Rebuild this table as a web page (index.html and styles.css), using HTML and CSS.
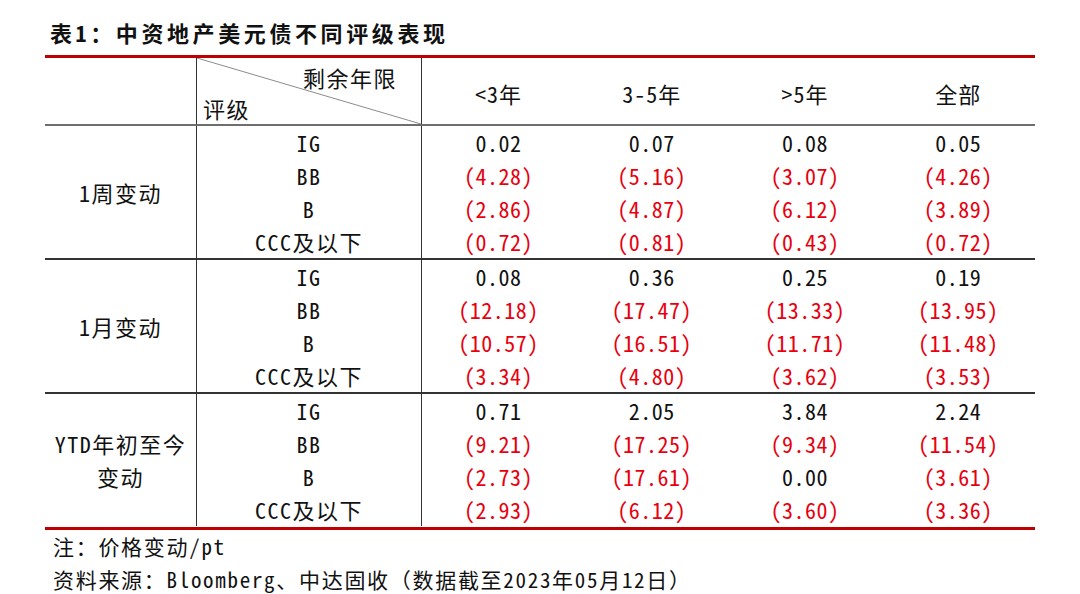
FILE: index.html
```html
<!DOCTYPE html>
<html lang="zh-CN">
<head>
<meta charset="utf-8">
<title>表1：中资地产美元债不同评级表现</title>
<link rel="stylesheet" href="styles.css">
</head>
<body>
<div class="page">
  <div class="title">表1：中资地产美元债不同评级表现</div>
  <div class="table">
    <div class="grid thead">
      <div class="cell vline"></div>
      <div class="cell vline diag">
        <svg class="diag-line" width="100%" height="100%" preserveAspectRatio="none"><line x1="0" y1="0" x2="100%" y2="100%"/></svg>
        <span class="diag-top">剩余年限</span>
        <span class="diag-bottom">评级</span>
      </div>
      <div class="cell head">&lt;3年</div>
      <div class="cell head">3-5年</div>
      <div class="cell head">&gt;5年</div>
      <div class="cell head">全部</div>
    </div>

    <div class="grid group">
      <div class="cell label vline">1周变动</div>
      <div class="cell rating vline">IG</div>
      <div class="cell num">0.02</div><div class="cell num">0.07</div><div class="cell num">0.08</div><div class="cell num">0.05</div>
      <div class="cell rating vline">BB</div>
      <div class="cell num neg">(4.28)</div><div class="cell num neg">(5.16)</div><div class="cell num neg">(3.07)</div><div class="cell num neg">(4.26)</div>
      <div class="cell rating vline">B</div>
      <div class="cell num neg">(2.86)</div><div class="cell num neg">(4.87)</div><div class="cell num neg">(6.12)</div><div class="cell num neg">(3.89)</div>
      <div class="cell rating vline">CCC及以下</div>
      <div class="cell num neg">(0.72)</div><div class="cell num neg">(0.81)</div><div class="cell num neg">(0.43)</div><div class="cell num neg">(0.72)</div>
    </div>

    <div class="grid group">
      <div class="cell label vline">1月变动</div>
      <div class="cell rating vline">IG</div>
      <div class="cell num">0.08</div><div class="cell num">0.36</div><div class="cell num">0.25</div><div class="cell num">0.19</div>
      <div class="cell rating vline">BB</div>
      <div class="cell num neg">(12.18)</div><div class="cell num neg">(17.47)</div><div class="cell num neg">(13.33)</div><div class="cell num neg">(13.95)</div>
      <div class="cell rating vline">B</div>
      <div class="cell num neg">(10.57)</div><div class="cell num neg">(16.51)</div><div class="cell num neg">(11.71)</div><div class="cell num neg">(11.48)</div>
      <div class="cell rating vline">CCC及以下</div>
      <div class="cell num neg">(3.34)</div><div class="cell num neg">(4.80)</div><div class="cell num neg">(3.62)</div><div class="cell num neg">(3.53)</div>
    </div>

    <div class="grid group last">
      <div class="cell label vline">YTD年初至今<br>变动</div>
      <div class="cell rating vline">IG</div>
      <div class="cell num">0.71</div><div class="cell num">2.05</div><div class="cell num">3.84</div><div class="cell num">2.24</div>
      <div class="cell rating vline">BB</div>
      <div class="cell num neg">(9.21)</div><div class="cell num neg">(17.25)</div><div class="cell num neg">(9.34)</div><div class="cell num neg">(11.54)</div>
      <div class="cell rating vline">B</div>
      <div class="cell num neg">(2.73)</div><div class="cell num neg">(17.61)</div><div class="cell num">0.00</div><div class="cell num neg">(3.61)</div>
      <div class="cell rating vline">CCC及以下</div>
      <div class="cell num neg">(2.93)</div><div class="cell num neg">(6.12)</div><div class="cell num neg">(3.60)</div><div class="cell num neg">(3.36)</div>
    </div>
  </div>
  <div class="note">注：价格变动/pt</div>
  <div class="note">资料来源：Bloomberg、中达固收<span class="fw">（</span>数据截至2023年05月12日<span class="fw">）</span></div>
</div>
</body>
</html>
```

FILE: styles.css
```css
html, body {
  margin: 0;
  padding: 0;
  background: #ffffff;
}

body {
  font-family: "Noto Sans CJK SC", "Noto Sans", sans-serif;
  font-feature-settings: "hwid" 1;
  color: #111111;
}

.page {
  width: 990px;
  padding-left: 45px;
}

.title {
  box-sizing: border-box;
  height: 55px;
  padding: 19px 0 0 5px;
  font-size: 22px;
  line-height: 27px;
  font-weight: 700;
  letter-spacing: 3.6px;
  color: #111111;
}

.table {
  border-top: 3px solid #c00000;
  border-bottom: 3px solid #c00000;
}

.grid {
  display: grid;
  grid-template-columns: 152px 225px repeat(4, 1fr);
}

.thead {
  height: 66px;
  border-bottom: 2px solid #6e6e6e;
}

.group {
  grid-template-rows: repeat(4, 33px);
  border-bottom: 2px solid #333333;
}

.group.last {
  border-bottom: none;
  padding-bottom: 1px;
}

.cell {
  font-size: 22px;
  line-height: 33px;
  text-align: center;
  white-space: nowrap;
}

.vline {
  border-right: 1px solid #333333;
}

.head {
  display: flex;
  align-items: center;
  justify-content: center;
  padding-top: 4px;
  letter-spacing: 1px;
}

.diag {
  position: relative;
  display: flex;
  flex-direction: column;
  justify-content: space-between;
  padding: 8px 24px 4px 6px;
}

.diag-line {
  position: absolute;
  left: 0;
  top: 0;
}

.diag-line line {
  stroke: #8c8c8c;
  stroke-width: 1;
}

.diag-top,
.diag-bottom {
  position: relative;
  line-height: 23px;
  letter-spacing: 1.5px;
}

.diag-top {
  text-align: right;
}

.diag-bottom {
  text-align: left;
}

.label {
  grid-row: 1 / span 4;
  display: flex;
  align-items: center;
  justify-content: center;
  letter-spacing: 1.5px;
}

.rating {
  grid-column: 2;
  letter-spacing: 1.5px;
}

.num {
  letter-spacing: 0.5px;
}

.neg {
  color: #e8000e;
}

.note {
  padding-left: 8px;
  font-size: 21px;
  line-height: 33px;
  letter-spacing: 1.7px;
  color: #111111;
}

.fw {
  font-feature-settings: normal;
}
```
